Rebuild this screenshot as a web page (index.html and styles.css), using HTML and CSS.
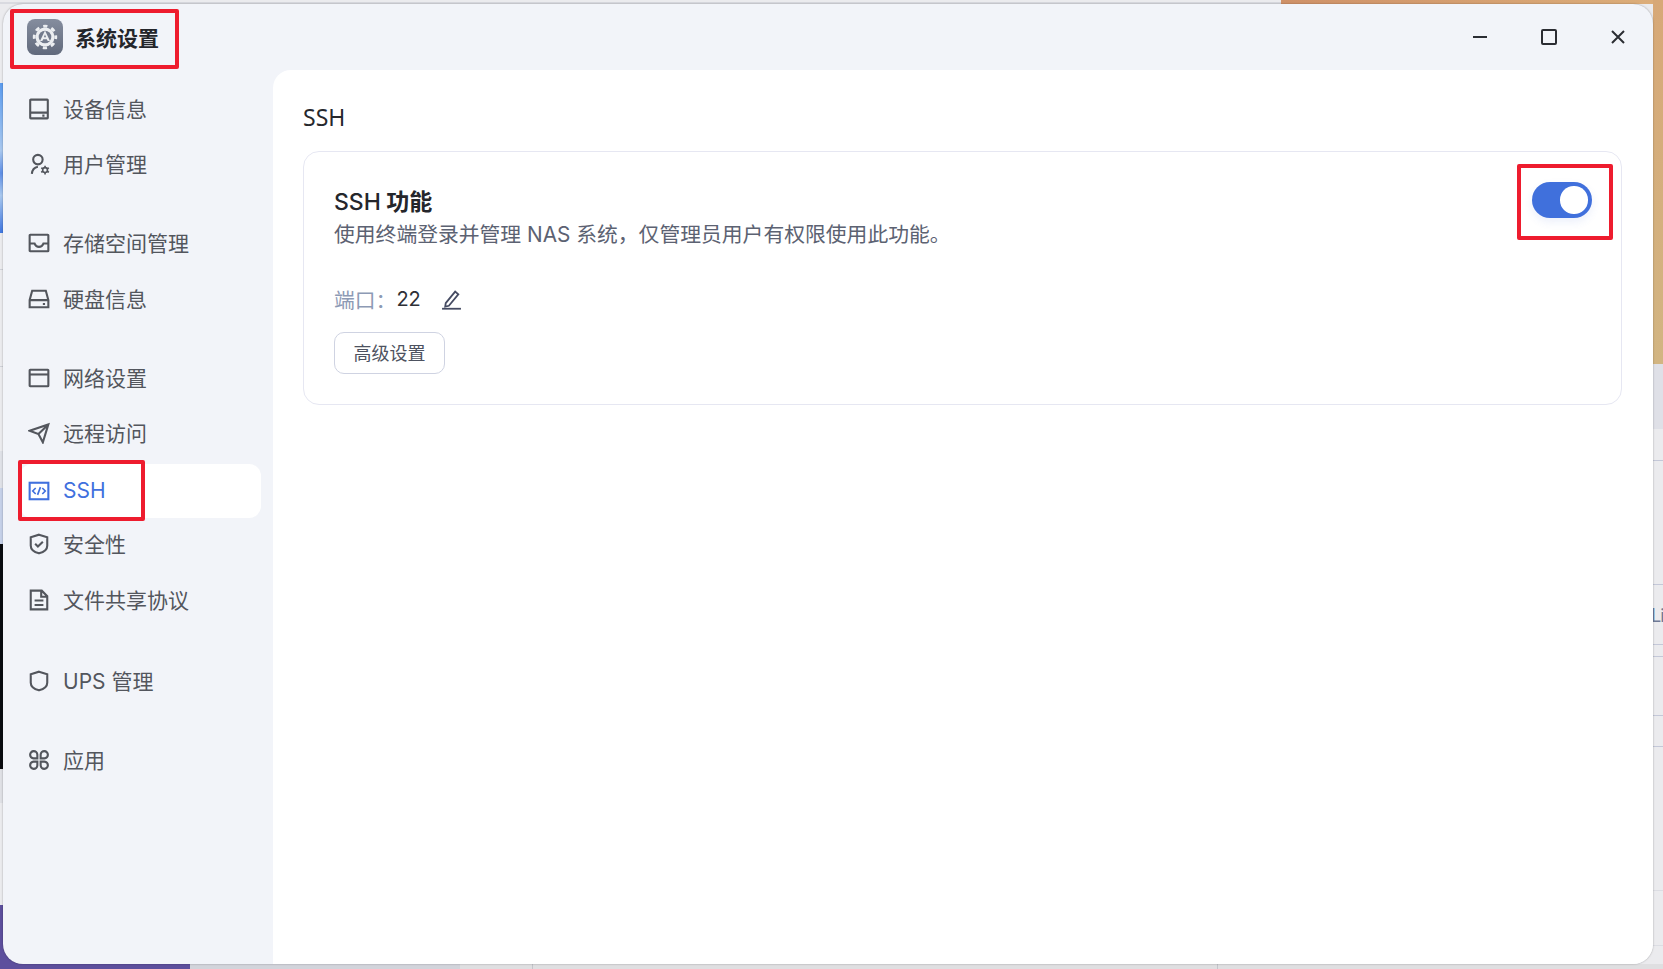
FILE: index.html
```html
<!DOCTYPE html>
<html lang="zh-CN">
<head>
<meta charset="utf-8">
<title>系统设置</title>
<link rel="stylesheet" href="styles.css">
</head>
<body>
<div class="desktop">
  <div class="wp wp-top"></div>
  <div class="wp wp-topline"></div>
  <div class="wp wp-right"></div>
  <div class="wp wp-rband"></div>
  <div class="wp wp-r r1"></div>
  <div class="wp wp-r r2"></div>
  <div class="wp wp-r r3"></div>
  <div class="wp wp-r r4"></div>
  <div class="wp wp-r r5"></div>
  <div class="wp wp-r r6"></div>
  <div class="wp wp-r r7"></div>
  <div class="wp wp-r r8"></div>
  <div class="wp wp-bottom"></div>
  <div class="wp wp-bgrey"></div>
  <div class="wp wp-bv v1"></div>
  <div class="wp wp-bv v2"></div>
  <div class="wp wp-purple"></div>
  <div class="wp wp-l1"></div>
  <div class="wp wp-lline l1"></div>
  <div class="wp wp-lline l2"></div>
  <div class="wp wp-l0"></div>
  <div class="wp wp-l2"></div>
  <div class="wp wp-dark"></div>
  <div class="wp wp-l3"></div>
  <span class="peek">Li</span>

  <div class="window">
    <aside class="sidebar">
      <div class="brand">
        <svg class="app-icon" viewBox="0 0 36 36" aria-hidden="true">
          <defs><linearGradient id="appg" x1="0" y1="0" x2="0" y2="1"><stop offset="0" stop-color="#858d9e"/><stop offset="1" stop-color="#626a7c"/></linearGradient></defs>
          <rect width="36" height="36" rx="8" fill="url(#appg)"/>
          <circle cx="18" cy="18" r="9.500" fill="#eceef1"/>
          <circle cx="18" cy="18" r="10.800" fill="none" stroke="#eceef1" stroke-width="2.800" stroke-dasharray="4.240 4.240" stroke-dashoffset="2.120"/>
          <circle cx="18" cy="18" r="6.300" fill="#737b8d"/>
          <path d="M18 11.500l5 10.500h-2.300l-.9-1.800h-3.600l-.9 1.800H13zM18 15.500l-1.100 2.700h2.200z" fill="#eceef1" fill-rule="evenodd"/>
        </svg>
        <strong class="brand-name">系统设置</strong>
      </div>
      <nav class="nav">
        <div class="group">
          <a class="item"><svg class="ico" viewBox="0 0 20 20"><rect x="2" y="1.500" width="16" height="17" rx=".5"/><path d="M2 13.300h16M13 16h2"/></svg>设备信息</a>
          <a class="item"><svg class="ico" viewBox="0 0 20 20"><circle cx="9" cy="6" r="4.300"/><path d="M3.500 19c.3-3.500 2.500-6 5.500-6.500"/><circle class="thin" cx="15.500" cy="15.500" r="2.200"/><path class="thin" d="M15.500 11.500v1.800M15.500 17.700v1.800M12 13.500l1.600.9M17.400 16.600l1.600.9M12 17.500l1.600-.9M17.400 14.400l1.600-.9"/></svg>用户管理</a>
        </div>
        <div class="group">
          <a class="item"><svg class="ico" viewBox="0 0 20 20"><rect x="1.500" y="2.500" width="17" height="15" rx=".5"/><path d="M1.500 10.500h4.500c1 2.500 2.500 3 4 3s3-.5 4-3h4.500"/></svg>存储空间管理</a>
          <a class="item"><svg class="ico" viewBox="0 0 20 20"><path d="M1.500 11l2.300-8.500h12.400L18.500 11v6.500h-17zM1.500 11h17M13.500 14.500h2"/></svg>硬盘信息</a>
        </div>
        <div class="group">
          <a class="item"><svg class="ico" viewBox="0 0 20 20"><rect x="1.500" y="2.500" width="17" height="15" rx=".5"/><path d="M1.500 6.800h17"/></svg>网络设置</a>
          <a class="item"><svg class="ico" viewBox="0 0 20 20"><path d="M1.500 8L18.500 2.200 13.500 18.500 9.500 11zM9.500 11l9-8.800"/></svg>远程访问</a>
          <a class="item active"><svg class="ico" viewBox="0 0 20 20"><rect x="1.500" y="2.500" width="17" height="15"/><path class="thin" d="M7 7.300L4.300 10 7 12.700M13 7.300l2.700 2.700-2.700 2.700M11.300 6.500L8.700 13.500"/></svg>SSH</a>
          <a class="item"><svg class="ico" viewBox="0 0 20 20"><path d="M10 1.500l7.500 2.300v7.700c0 3-3 5.700-7.500 7-4.500-1.300-7.500-4-7.500-7V3.800z"/><path d="M6.500 9.800l2.500 2.500 4.500-4.300"/></svg>安全性</a>
          <a class="item"><svg class="ico" viewBox="0 0 20 20"><path d="M2.500 1.500h10l5 5v12h-15zM12 1.500V7h5.500M6 10.500h8M6 14.500h8"/></svg>文件共享协议</a>
        </div>
        <div class="group group-ups">
          <a class="item"><svg class="ico" viewBox="0 0 20 20"><path d="M10 1.500l7.500 2.300v7.700c0 3-3 5.700-7.500 7-4.500-1.300-7.500-4-7.500-7V3.800z"/></svg>UPS 管理</a>
        </div>
        <div class="group">
          <a class="item"><svg class="ico" viewBox="0 0 20 20"><path d="M8.500 8.500H5a3.300 3.300 0 1 1 3.500-3.500zM11.500 8.500H15A3.300 3.300 0 1 0 11.500 5zM8.500 11.500H5A3.300 3.300 0 1 0 8.500 15zM11.500 11.500H15A3.300 3.300 0 1 1 11.500 15z"/></svg>应用</a>
        </div>
      </nav>
    </aside>

    <div class="column">
      <header class="titlebar">
        <svg class="win-btn" viewBox="0 0 24 24"><path d="M5 12h14"/></svg>
        <svg class="win-btn" viewBox="0 0 24 24"><rect x="5" y="5" width="14" height="14" rx="1"/></svg>
        <svg class="win-btn" viewBox="0 0 24 24"><path d="M6 6l12 12M18 6L6 18"/></svg>
      </header>
      <main class="main">
        <h1 class="page-title">SSH</h1>
        <section class="card">
          <div class="card-head">
            <div>
              <h2 class="card-title"><span class="latin">SSH</span> 功能</h2>
              <p class="card-desc">使用终端登录并管理 NAS 系统，仅管理员用户有权限使用此功能。</p>
            </div>
            <span class="switch"><span class="knob"></span></span>
          </div>
          <div class="port">
            <span class="port-label">端口：</span><span class="port-value">22</span>
            <svg class="edit" viewBox="0 0 20 20"><path d="M4.500 13.500L13.500 2.500l3 2.500-9 11-3.500.7z"/><path d="M1 18.800h18"/></svg>
          </div>
          <button class="btn">高级设置</button>
        </section>
      </main>
    </div>
  </div>

  <div class="mark mark-brand"></div>
  <div class="mark mark-ssh"></div>
  <div class="mark mark-switch"></div>
</div>
</body>
</html>
```
FILE: styles.css
```css
* { box-sizing: border-box; }
html, body { margin: 0; height: 100%; overflow: hidden; }
body { font-family: Inter, "Noto Sans CJK SC", "Noto Sans", sans-serif; }
.desktop { position: relative; width: 1663px; height: 969px; background: #ebebee; overflow: hidden; }
.wp { position: absolute; }
.wp-top { left: 1281px; top: 0; width: 382px; height: 4px; background: linear-gradient(90deg, #cf9168, #dcae7a); }
.wp-topline { left: 0; top: 2px; width: 1281px; height: 2px; background: #d9dae0; }
.wp-right { left: 1653px; top: 0; width: 10px; height: 364px; background: linear-gradient(#d7a877, #d2b582); }
.wp-rband { left: 1653px; top: 364px; width: 10px; height: 65px; background: #dfe0e7; }
.wp-r { left: 1653px; width: 10px; height: 1px; background: #c4c8d8; }
.r1 { top: 460px; } .r2 { top: 584px; } .r3 { top: 644px; } .r4 { top: 656px; }
.r5 { top: 715px; } .r6 { top: 746px; } .r7 { top: 890px; background: #dcdde3; } .r8 { top: 945px; background: #dcdde3; }
.wp-bottom { left: 190px; top: 964px; width: 1473px; height: 5px; background: #dfdfe1; }
.wp-bgrey { left: 190px; top: 964px; width: 270px; height: 5px; background: #d2d4db; }
.wp-bv { top: 964px; width: 1px; height: 5px; background: #c4c5cb; }
.v1 { left: 532px; } .v2 { left: 1217px; }
.wp-purple { left: 0; top: 905px; width: 190px; height: 64px; background: #5d4f9d; }
.wp-l1 { left: 0; top: 83px; width: 3px; height: 150px; background: linear-gradient(#5c9cef, #a9c8ef 45%, #5f8fe6 60%, #a9c8ef 75%, #3f76e0); }
.wp-lline { left: 0; width: 3px; height: 1px; background: #cfd1d8; }
.l1 { top: 269px; } .l2 { top: 366px; }
.wp-l0 { left: 0; top: 451px; width: 3px; height: 37px; background: #dfe1e7; }
.wp-l2 { left: 0; top: 488px; width: 3px; height: 56px; background: #c5d0e8; }
.wp-dark { left: 0; top: 544px; width: 3px; height: 225px; background: #0a0b10; }
.wp-l3 { left: 0; top: 769px; width: 3px; height: 34px; background: #dfe0e5; }
.peek { position: absolute; left: 1651px; top: 605px; font-size: 18px; line-height: 22px; letter-spacing: -1px; color: #6f7a96; }

.window {
  position: absolute; left: 3px; top: 4px; width: 1650px; height: 960px;
  display: flex; background: #f2f4f9; border-radius: 20px; overflow: hidden;
  box-shadow: 0 0 2px rgba(0,0,0,.35);
}
.sidebar { width: 270px; flex: none; display: flex; flex-direction: column; }
.brand { height: 66px; display: flex; align-items: center; gap: 12px; padding-left: 24px; }
.app-icon { width: 36px; height: 36px; }
.brand-name { font-size: 21px; font-weight: 700; color: #24262b; }
.nav { display: flex; flex-direction: column; gap: 25px; padding: 13.500px 12px 0 17px; }
.group { display: flex; flex-direction: column; gap: 1.500px; }
.group-ups { margin-top: 2px; }
.item {
  height: 54px; display: flex; align-items: center; gap: 13px; padding: 0 0 6px 8px;
  font-size: 21px; color: #53565d; border-radius: 12px;
}
.item.active { background: #fff; color: #4070de; padding-bottom: 0; }
.ico { width: 22px; height: 22px; flex: none; margin-top: 2px; fill: none; stroke: currentColor; stroke-width: 1.900; }
.item.active .ico { margin-top: 0; }
.ico .thin { stroke-width: 1.500; }

.column { flex: 1; display: flex; flex-direction: column; min-width: 0; }
.titlebar { height: 66px; flex: none; display: flex; justify-content: flex-end; align-items: center; gap: 45px; padding-right: 23px; }
.win-btn { width: 24px; height: 24px; fill: none; stroke: #2b2d33; stroke-width: 2; }
.main { flex: 1; background: #fff; border-top-left-radius: 18px; padding: 32px 31px 0 30px; }
.page-title { margin: 0 0 19px; font-family: "Noto Sans", sans-serif; font-size: 23px; line-height: 30px; font-weight: 400; color: #26282d; }
.card { border: 1px solid #e6e7f2; border-radius: 16px; height: 254px; padding: 34px 29px 0 30px; }
.card-head { display: flex; justify-content: space-between; align-items: flex-start; }
.card-title { margin: 0 0 3px; font-size: 23px; line-height: 32px; font-weight: 700; color: #24262b; }
.latin { font-weight: 500; }
.card-desc { margin: 0; font-size: 20.800px; line-height: 28px; color: #5c6272; }
.switch { width: 60px; height: 36px; margin-top: -4px; border-radius: 18px; background: #4070dc; position: relative; box-shadow: 0 4px 8px rgba(64,112,220,.1); }
.knob { position: absolute; right: 4.500px; top: 4px; width: 27.500px; height: 27.500px; border-radius: 50%; background: #fff; }
.port { display: flex; align-items: center; margin-top: 36px; height: 28px; font-size: 20.800px; }
.port-label { color: #8d9ab5; }
.port-value { color: #2e3036; font-size: 20px; }
.edit { width: 21px; height: 21px; margin-left: 20px; fill: none; stroke: #454b62; stroke-width: 1.700; }
.btn {
  display: block; margin-top: 19px; width: 111px; height: 42px; background: #fff;
  border: 1px solid #cfd3e2; border-radius: 10px; font: inherit; font-size: 18px; color: #4d5260; padding: 0 0 3px;
}

.mark { position: absolute; border: 4px solid #ee1c2e; border-radius: 2px; }
.mark-brand { left: 10px; top: 9px; width: 169px; height: 60px; }
.mark-ssh { left: 18px; top: 460px; width: 127px; height: 61px; }
.mark-switch { left: 1517px; top: 164px; width: 96px; height: 76px; }
```
